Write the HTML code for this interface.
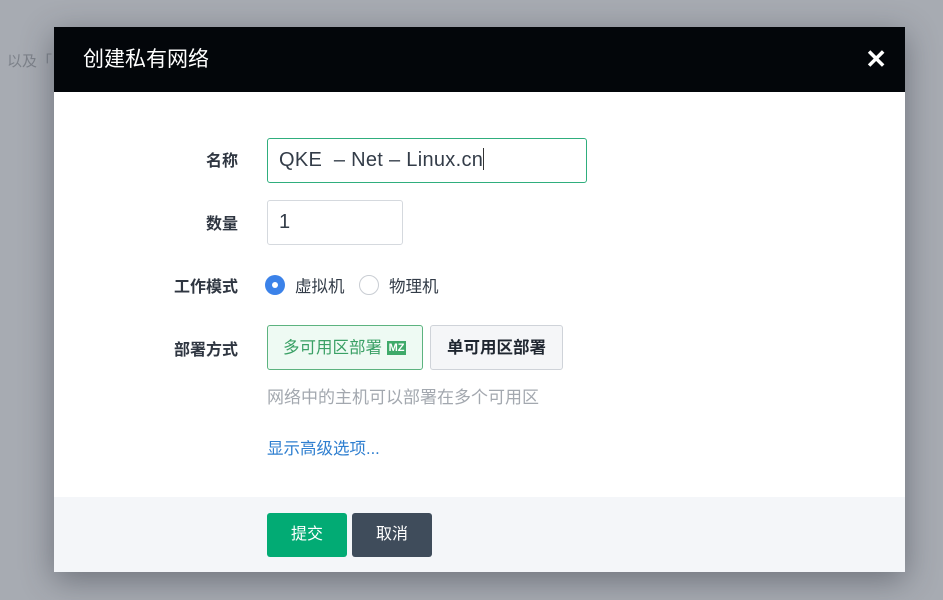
<!DOCTYPE html>
<html><head><meta charset="utf-8"><style>
*{box-sizing:border-box;margin:0;padding:0}
body{width:943px;height:600px;overflow:hidden;background:#a7abb2;font-family:"Liberation Sans","Noto Sans CJK SC",sans-serif;position:relative}
.bgtxt{position:absolute;left:7px;top:50px;color:#7d828a;font-size:15px}
.modal{position:absolute;left:54px;top:27px;width:851px;height:545px;background:#fff;box-shadow:0 8px 30px rgba(40,45,55,.45)}
.hd{height:65px;background:#03060a;color:#fff;font-size:21px;padding-left:29px;line-height:65px;position:relative}
.x{position:absolute;right:18px;top:0;font-size:26px;font-weight:bold}
.lbl{position:absolute;left:100px;width:84px;text-align:right;font-size:16px;color:#2f3641;font-weight:bold}
.inp{position:absolute;border:1px solid #d5d9de;border-radius:3px;font-size:20px;color:#333c48;padding-left:11px}
.ft{position:absolute;left:0;right:0;bottom:0;height:75px;background:#f4f6f9}
.btn{position:absolute;top:16px;height:44px;border-radius:3px;color:#fff;font-size:16px;line-height:44px;text-align:center}
</style></head><body>
<div class="bgtxt">以及「</div>
<div class="modal">
<div class="hd">创建私有网络<span class="x">✕</span></div>
<div class="lbl" style="top:120px">名称</div>
<div class="inp" style="left:213px;top:111px;width:320px;height:45px;border:1.5px solid #2fae7d;line-height:42px;letter-spacing:0.3px">QKE &nbsp;– Net – Linux.cn<span style="display:inline-block;width:1px;height:22px;background:#333;vertical-align:-4px"></span></div>
<div class="lbl" style="top:183px">数量</div>
<div class="inp" style="left:213px;top:173px;width:136px;height:45px;line-height:43px">1</div>
<div class="lbl" style="top:246px">工作模式</div>
<div style="position:absolute;left:211px;top:248px;width:20px;height:20px;border-radius:50%;background:#3b82e9"><div style="position:absolute;left:7px;top:7px;width:6px;height:6px;border-radius:50%;background:#fff"></div></div>
<div style="position:absolute;left:241px;top:246px;font-size:16.5px;color:#333c48">虚拟机</div>
<div style="position:absolute;left:305px;top:248px;width:20px;height:20px;border-radius:50%;border:1px solid #c9cdd3"></div>
<div style="position:absolute;left:335px;top:246px;font-size:16.5px;color:#333c48">物理机</div>
<div class="lbl" style="top:309px">部署方式</div>
<div style="position:absolute;left:213px;top:298px;width:156px;height:45px;border:1px solid #5cb37f;border-radius:3px;background:#eefaf3;color:#3aa065;font-size:16.5px;line-height:45px;padding-left:15px">多可用区部署 <span style="display:inline-block;background:#3faa6a;color:#fff;font-size:11px;font-weight:bold;line-height:14px;padding:0 2px;vertical-align:2px">MZ</span></div>
<div style="position:absolute;left:376px;top:298px;width:133px;height:45px;border:1px solid #cfd3d9;border-radius:3px;background:#f5f6f8;color:#1f2630;font-size:16.5px;font-weight:bold;line-height:45px;text-align:center">单可用区部署</div>
<div style="position:absolute;left:213px;top:356px;font-size:17px;color:#a3a8af">网络中的主机可以部署在多个可用区</div>
<div style="position:absolute;left:213px;top:408px;font-size:16.5px;color:#2f7fd0">显示高级选项...</div>
<div class="ft">
<div class="btn" style="left:213px;width:80px;background:#02ab74">提交</div>
<div class="btn" style="left:298px;width:80px;background:#3f4c5b">取消</div>
</div>
</div>
</body></html>
